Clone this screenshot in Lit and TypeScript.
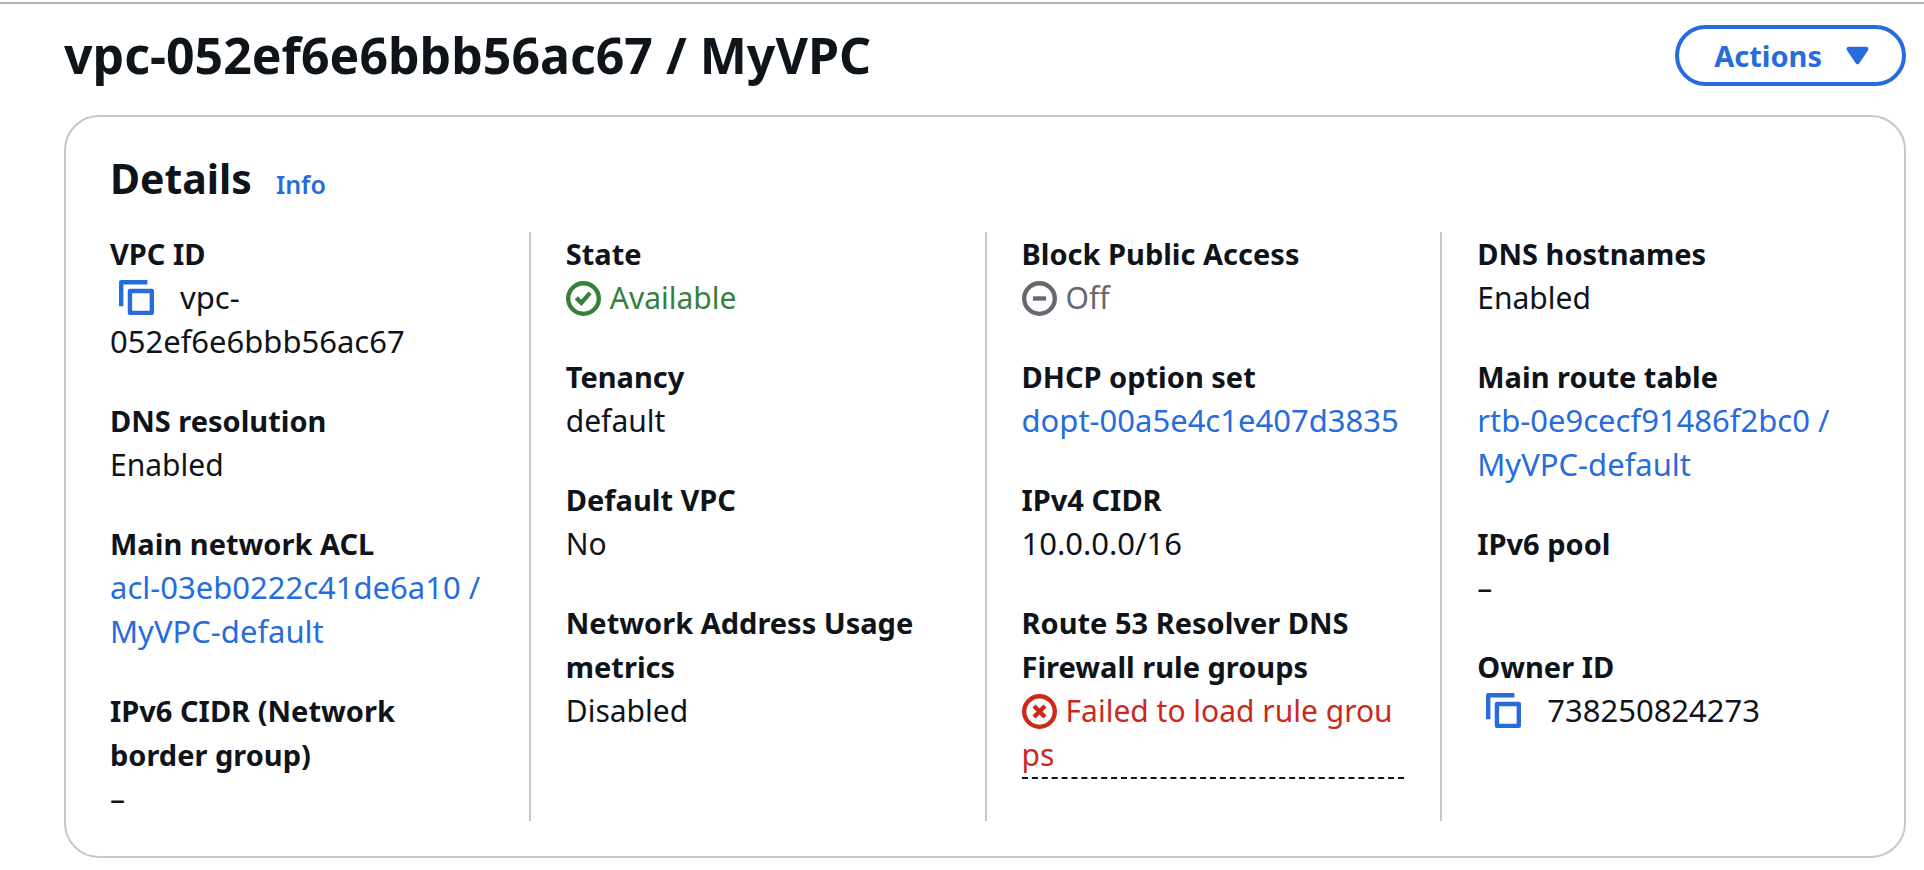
import { LitElement, html, css, svg, TemplateResult } from "lit";
import { customElement, property } from "lit/decorators.js";

type IconName = "copy" | "success" | "stopped" | "error" | "caret";

const GLYPHS: Record<IconName, TemplateResult> = {
  copy: svg`
    <path d="M1 12V1h12" stroke-width="2" />
    <rect x="5" y="5" width="10" height="10" stroke-width="2" />`,
  success: svg`
    <circle cx="8" cy="8" r="7" stroke-width="2" />
    <path d="m4.7 7.7 2.3 2.3 4-4.6" stroke-width="2" stroke-linejoin="miter" />`,
  stopped: svg`
    <circle cx="8" cy="8" r="7" stroke-width="2" />
    <path d="M11 8H5" stroke-width="2" />`,
  error: svg`
    <circle cx="8" cy="8" r="7" stroke-width="2" />
    <path d="m10.5 5.5-5 5M5.5 5.5l5 5" stroke-width="2" />`,
  caret: svg`<path d="M4 5h8l-4 6z" fill="currentColor" stroke-width="2" />`,
};

@customElement("ui-icon")
export class UiIcon extends LitElement {
  @property() name: IconName = "copy";

  static styles = css`
    :host {
      display: inline-flex;
      vertical-align: top;
    }
    .glyph {
      width: 35px;
      height: 35px;
      fill: none;
      stroke: currentColor;
      stroke-linejoin: round;
    }
  `;

  render() {
    return html`<svg class="glyph" viewBox="0 0 16 16" aria-hidden="true">${GLYPHS[this.name]}</svg>`;
  }
}

interface Field {
  label: string;
  value: TemplateResult | string;
}

const link = (text: string) => html`<a class="link id" href="#">${text}</a>`;

const copyable = (name: string, text: TemplateResult | string) => html`
  <button class="copy" type="button" aria-label="Copy ${name}"><ui-icon name="copy"></ui-icon></button><span class="id">${text}</span>
`;

const COLUMNS: Field[][] = [
  [
    { label: "VPC ID", value: copyable("VPC ID", html`vpc-<wbr />052ef6e6bbb56ac67`) },
    { label: "DNS resolution", value: "Enabled" },
    { label: "Main network ACL", value: link("acl-03eb0222c41de6a10 / MyVPC-default") },
    { label: "IPv6 CIDR (Network border group)", value: "–" },
  ],
  [
    {
      label: "State",
      value: html`<span class="status success"><ui-icon class="mark" name="success"></ui-icon>Available</span>`,
    },
    { label: "Tenancy", value: "default" },
    { label: "Default VPC", value: "No" },
    { label: "Network Address Usage metrics", value: "Disabled" },
  ],
  [
    {
      label: "Block Public Access",
      value: html`<span class="status stopped"><ui-icon class="mark" name="stopped"></ui-icon>Off</span>`,
    },
    { label: "DHCP option set", value: link("dopt-00a5e4c1e407d3835") },
    { label: "IPv4 CIDR", value: html`<span class="id">10.0.0.0/16</span>` },
    {
      label: "Route 53 Resolver DNS Firewall rule groups",
      value: html`<button class="trigger" type="button"><span class="status error"><ui-icon class="mark" name="error"></ui-icon>Failed to load rule groups</span></button>`,
    },
  ],
  [
    { label: "DNS hostnames", value: "Enabled" },
    { label: "Main route table", value: link("rtb-0e9cecf91486f2bc0 / MyVPC-default") },
    { label: "IPv6 pool", value: "–" },
    { label: "Owner ID", value: copyable("Owner ID", "738250824273") },
  ],
];

@customElement("app-root")
export class AppRoot extends LitElement {
  static styles = css`
    :host {
      --text: #0f141a;
      --link: #276cdc;
      --line: #c6c6cd;
      display: block;
      box-sizing: border-box;
      padding-top: 2px;
      background: #fff;
      color: var(--text);
      font: 400 30px/44px "Noto Sans", "Open Sans", sans-serif;
    }
    .page {
      border-top: 2px solid #b4b4bb;
      padding: 21px 18px 12px 64px;
    }
    .header {
      display: flex;
      align-items: center;
      justify-content: space-between;
      gap: 32px;
      margin-bottom: 29px;
    }
    .title {
      margin: 0;
      font-size: 50px;
      font-weight: 700;
      line-height: 61px;
    }
    button {
      font: inherit;
      color: inherit;
      background: none;
      border: 0;
      padding: 0;
      cursor: pointer;
    }
    .actions {
      display: flex;
      align-items: center;
      gap: 18px;
      height: 61px;
      padding: 0 27px 0 35px;
      border: 4px solid var(--link);
      border-radius: 31px;
      color: var(--link);
      font-size: 29px;
      font-weight: 700;
    }
    .card {
      border: 2px solid var(--line);
      border-radius: 35px;
      padding: 35px 44px;
    }
    .card-header {
      display: flex;
      align-items: baseline;
      gap: 24px;
      margin-bottom: 28px;
    }
    .card-title {
      margin: 0;
      font-size: 41px;
      font-weight: 700;
      line-height: 52px;
    }
    .link {
      color: var(--link);
      text-decoration: none;
    }
    .info {
      font-size: 25px;
      font-weight: 600;
      line-height: 32px;
    }
    .columns {
      display: flex;
      gap: 36px;
    }
    .column {
      flex: 1 1 0;
      min-width: 0;
      margin: 0;
      display: flex;
      flex-direction: column;
      gap: 35px;
    }
    .column + .column {
      border-left: 2px solid var(--line);
      padding-left: 35px;
    }
    .label {
      font-size: 29px;
      font-weight: 700;
    }
    .value {
      margin: 0;
    }
    .id {
      font-size: 31px;
      line-height: 43px;
    }
    .copy {
      height: 35px;
      margin: 4px 26px 0 9px;
      color: var(--link);
      vertical-align: top;
    }
    .mark {
      margin: 5px 9px 0 0;
    }
    .success {
      color: #37803a;
    }
    .stopped {
      color: #656871;
    }
    .error {
      color: #cc291c;
    }
    .trigger {
      display: block;
      width: 100%;
      border-bottom: 2px dashed var(--text);
      text-align: left;
      word-break: break-all;
    }
  `;

  render() {
    return html`
      <main class="page">
        <header class="header">
          <h1 class="title">vpc-052ef6e6bbb56ac67 / MyVPC</h1>
          <button class="actions" type="button">Actions<ui-icon name="caret"></ui-icon></button>
        </header>
        <section class="card" aria-labelledby="details">
          <div class="card-header">
            <h2 class="card-title" id="details">Details</h2>
            <a class="link info" href="#">Info</a>
          </div>
          <div class="columns">
            ${COLUMNS.map(
              (fields) => html`<dl class="column">
                ${fields.map(
                  (f) => html`<div>
                    <dt class="label">${f.label}</dt>
                    <dd class="value">${f.value}</dd>
                  </div>`
                )}
              </dl>`
            )}
          </div>
        </section>
      </main>
    `;
  }
}
